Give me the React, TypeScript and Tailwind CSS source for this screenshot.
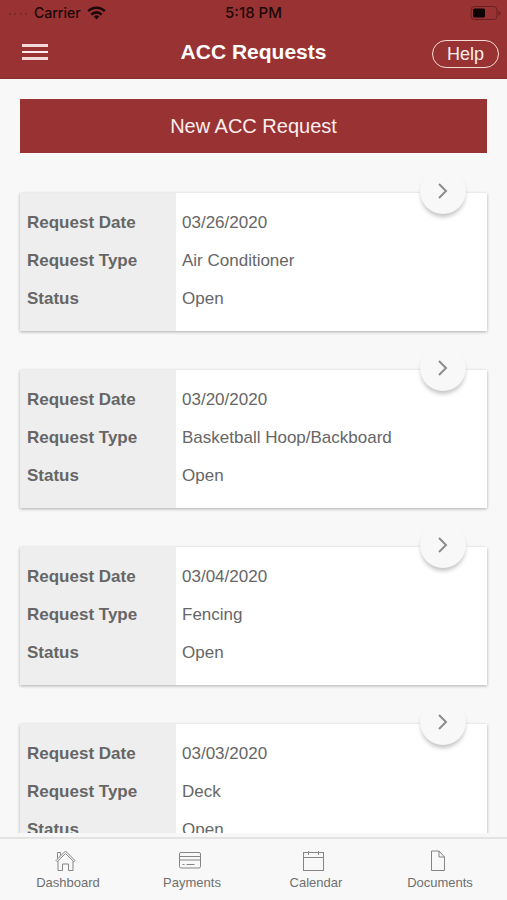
import React from "react";

interface AccRequest {
  date: string;
  type: string;
  status: string;
}

const requests: AccRequest[] = [
  { date: "03/26/2020", type: "Air Conditioner", status: "Open" },
  { date: "03/20/2020", type: "Basketball Hoop/Backboard", status: "Open" },
  { date: "03/04/2020", type: "Fencing", status: "Open" },
  { date: "03/03/2020", type: "Deck", status: "Open" },
];

function StatusBar() {
  return (
    <div className="grid h-[26px] grid-cols-[1fr_auto_1fr] items-center px-1.5 font-['Inter',sans-serif] text-sm font-medium text-[#1c0808]">
      <div className="flex items-center gap-1.5">
        <svg width="22" height="4" viewBox="0 0 22 4" fill="#74262a" aria-hidden="true">
          <circle cx="4" cy="3" r="1" />
          <circle cx="9" cy="3" r="1" />
          <circle cx="15" cy="3" r="1" />
          <circle cx="20" cy="3" r="1" />
        </svg>
        <span>Carrier</span>
        <svg width="19" height="14" viewBox="0 0 19 14" aria-hidden="true">
          <g fill="none" stroke="#1c0808" strokeWidth="2.6">
            <path d="M1.2 5.2a11.6 11.6 0 0 1 16.6 0" />
            <path d="M4.3 8.6a7.3 7.3 0 0 1 10.4 0" />
          </g>
          <path d="M6.7 10.6a4 4 0 0 1 5.6 0L9.500 13.6z" fill="#1c0808" />
        </svg>
      </div>
      <div className="text-[15px]">5:18 PM</div>
      <div className="flex justify-end">
        <svg width="31" height="14" viewBox="0 0 31 14" aria-hidden="true">
          <rect x="1" y="0.5" width="26" height="13" rx="3.5" fill="none" stroke="#6a2023" />
          <rect x="3" y="2.5" width="12" height="9" rx="1.5" fill="#0d0303" />
          <path d="M28.500 5v4.500c1.300-.4 2-1.300 2-2.250s-.7-1.850-2-2.250z" fill="#6a2023" />
        </svg>
      </div>
    </div>
  );
}

function Header() {
  return (
    <header className="h-[79px] shrink-0 border-b border-[#8a2b2e] bg-[#993333] text-white">
      <StatusBar />
      <div className="grid h-[52px] grid-cols-[1fr_auto_1fr] items-center px-2">
        <button type="button" aria-label="Menu" className="ml-3.5 flex w-[26px] flex-col gap-1">
          <span className="h-[3px] w-full bg-[#f3d9d7]" />
          <span className="h-[2px] w-full bg-[#fbeaea]" />
          <span className="h-[3px] w-full bg-[#f3d9d7]" />
        </button>
        <h1 className="text-[21px] leading-7 font-bold">ACC Requests</h1>
        <button
          type="button"
          className="mt-1 h-7 w-[67px] justify-self-end rounded-full border border-[#f6dcd8] text-lg leading-6 text-[#fdeeee]"
        >
          Help
        </button>
      </div>
    </header>
  );
}

function RequestCard({ request }: { request: AccRequest }) {
  const rows = [
    ["Request Date", request.date],
    ["Request Type", request.type],
    ["Status", request.status],
  ];
  return (
    <li className="relative bg-white shadow-[0_1px_3px_rgba(0,0,0,0.3)]">
      <dl className="bg-linear-to-r from-[#eeeeee] from-[156px] to-white to-[156px] pt-[11px] pb-[13px]">
        {rows.map(([label, value]) => (
          <div key={label} className="flex h-[38px] items-center text-[17px] text-[#666666]">
            <dt className="w-[156px] shrink-0 pl-[7px] font-bold">{label}</dt>
            <dd className="pl-1.5">{value}</dd>
          </div>
        ))}
      </dl>
      <button
        type="button"
        aria-label={`Open ${request.type} request`}
        className="absolute -top-[25px] right-[21px] flex size-[46px] items-center justify-center rounded-full bg-[#f8f8f8] shadow-[0_4px_4px_-1px_rgba(0,0,0,0.24)]"
      >
        <svg width="12" height="18" viewBox="0 0 12 18" fill="none" stroke="#8c8c8c" strokeWidth="2" aria-hidden="true">
          <path d="M2 2l7 7-7 7" />
        </svg>
      </button>
    </li>
  );
}

const iconProps = {
  width: 24,
  height: 24,
  viewBox: "0 0 24 24",
  fill: "none",
  stroke: "#858585",
  strokeWidth: 1,
  className: "mr-1",
  "aria-hidden": true,
} as const;

const tabs: { label: string; icon: React.ReactNode }[] = [
  {
    label: "Dashboard",
    icon: (
      <svg {...iconProps}>
        <path d="M2 11.500 11.500 2 21 11.500l-1.200 1.200L11.500 4.500l-8.300 8.200z" />
        <path d="M4 12.300V21.500h4.500V15h6v6.500H19V12.300M3.500 9.500V3.500h3v3" />
      </svg>
    ),
  },
  {
    label: "Payments",
    icon: (
      <svg {...iconProps}>
        <rect x="1.500" y="3.500" width="21" height="15.500" rx="1.500" />
        <path d="M1.500 7.500h21M1.500 11h21M4.500 15.500h2M8.500 15.500h8" />
      </svg>
    ),
  },
  {
    label: "Calendar",
    icon: (
      <svg {...iconProps}>
        <rect x="1.500" y="3.500" width="20" height="18" />
        <path d="M1.500 8.500h20M6.500 2v4M16.500 2v4" />
      </svg>
    ),
  },
  {
    label: "Documents",
    icon: (
      <svg {...iconProps}>
        <path d="M5.500 2h7.500l5.500 6v13.500h-13zM13 2v6h5.500" />
      </svg>
    ),
  },
];

function TabBar() {
  return (
    <nav className="h-[63px] shrink-0 border-t-2 border-[#e3e3e3] bg-[#f8f8f8] pr-[5px] pl-1.5">
      <ul className="grid h-full grid-cols-4">
        {tabs.map(({ label, icon }) => (
          <li key={label}>
            <a href="#" className="flex flex-col items-center pt-2.5 text-[13px] leading-5 text-[#6f6f6f]">
              {icon}
              <span>{label}</span>
            </a>
          </li>
        ))}
      </ul>
    </nav>
  );
}

export default function App() {
  return (
    <div className="flex h-screen flex-col bg-[#f8f8f8] font-['Liberation_Sans',Arial,sans-serif]">
      <Header />
      <main className="mb-1 min-h-0 flex-1 overflow-y-auto px-5 pt-5 pb-10 [scrollbar-width:none]">
        <button type="button" className="h-[54px] w-full bg-[#993333] text-xl text-[#fdeeee]">
          New ACC Request
        </button>
        <ul className="mt-10 flex flex-col gap-[39px]">
          {requests.map((request) => (
            <RequestCard key={request.date} request={request} />
          ))}
        </ul>
      </main>
      <TabBar />
    </div>
  );
}
